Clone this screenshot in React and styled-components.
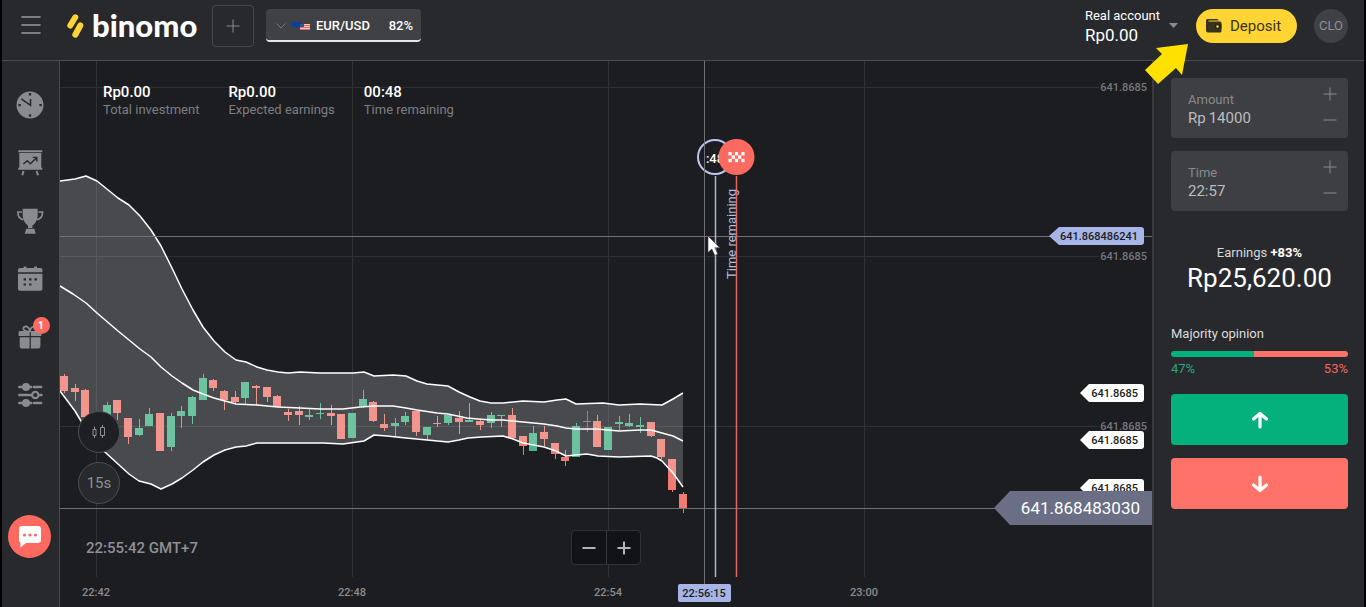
import React from "react";
import styled, { createGlobalStyle } from "styled-components";

const GlobalStyle = createGlobalStyle`
  * { box-sizing: border-box; }
  body {
    margin: 0;
    background: #000;
    color: #fff;
    font-family: Roboto, "Liberation Sans", sans-serif;
    font-size: 13px;
  }
  button, input { font: inherit; color: inherit; }
  button { border: 0; padding: 0; background: none; cursor: pointer; }
  svg { display: block; }
`;

const Page = styled.div`
  display: flex;
  flex-direction: column;
  min-height: 100vh;
  margin: 0 2px;
  background: #28292d;
`;

/* ---------- header ---------- */

const Header = styled.header`
  position: relative;
  display: flex;
  align-items: center;
  height: 61px;
  padding: 0 16px 9px 18px;
  border-bottom: 1px solid #4a4b4e;
`;

const MenuButton = styled.button`
  width: 22px;
  height: 22px;
  margin-right: 25px;
`;

const Logo = styled.a`
  display: flex;
  align-items: center;
  gap: 8px;
  width: 145px;
  color: #fff;
  text-decoration: none;
`;

const LogoText = styled.span`
  padding-bottom: 2px;
  font-family: Lato, sans-serif;
  font-weight: 900;
  font-size: 31px;
  line-height: 32px;
`;

const AddButton = styled.button`
  display: grid;
  place-items: center;
  width: 42px;
  height: 42px;
  border: 1px solid #47484c;
  border-radius: 4px;
`;

const AssetTab = styled.button`
  display: flex;
  align-items: center;
  width: 155px;
  height: 33px;
  margin-left: 12px;
  padding: 2px 8px 0 10px;
  border-bottom: 2px solid #e6e6e7;
  border-radius: 4px;
  background: #404144;
  font-weight: 500;

  svg { margin-right: 6px; }
  span:last-child { margin-left: auto; }
`;

const AccountButton = styled.button`
  display: flex;
  align-items: center;
  gap: 9px;
  margin-left: auto;
  text-align: left;
`;

const AccountName = styled.span`
  display: block;
  line-height: 18px;
`;

const AccountBalance = styled.span`
  display: block;
  font-size: 17px;
  line-height: 20px;
`;

const DepositButton = styled.button`
  display: flex;
  align-items: center;
  gap: 8px;
  width: 101px;
  height: 34px;
  margin-left: 18px;
  padding-left: 10px;
  border-radius: 17px;
  background: #ffd433;
  color: #38331f;
  font-size: 15px;
`;

const Avatar = styled.button`
  width: 34px;
  height: 34px;
  margin-left: 17px;
  border-radius: 50%;
  background: #404144;
  color: #8f9093;
`;

const Pointer = styled.svg`
  position: absolute;
  right: 176px;
  top: 44px;
  z-index: 2;
`;

/* ---------- body ---------- */

const Body = styled.div`
  display: flex;
  flex: 1;
`;

const Sidebar = styled.nav`
  display: flex;
  flex-direction: column;
  align-items: center;
  gap: 30px;
  width: 58px;
  padding: 30px 2px 49px 0;
  border-right: 1px solid #4a4b4e;
`;

const SideButton = styled.button`
  position: relative;
  width: 28px;
  height: 28px;
  color: #8a8b8f;
`;

const Badge = styled.span`
  position: absolute;
  top: -6px;
  right: -6px;
  width: 17px;
  border-radius: 50%;
  background: #ff6a60;
  color: #fff;
  font-size: 11px;
  font-weight: 700;
  line-height: 17px;
`;

const ChatButton = styled.button`
  display: grid;
  place-items: center;
  width: 43px;
  height: 43px;
  margin-top: auto;
  border-radius: 50%;
  background: #ff6a60;
`;

/* ---------- chart ---------- */

const Chart = styled.main`
  position: relative;
  flex: 1;
  min-width: 0;
  min-height: 546px;
  background: #1c1d21;
`;

const Canvas = styled.svg`
  position: absolute;
  inset: 0;
  width: 100%;
  height: 100%;
  overflow: hidden;
  font-size: 11px;
`;

const Stats = styled.dl`
  position: relative;
  display: flex;
  gap: 29px;
  margin: 0;
  padding: 22px 43px;
`;

const Stat = styled.div`
  display: flex;
  flex-direction: column-reverse;
`;

const StatLabel = styled.dt`
  color: #7d7e82;
  line-height: 18px;
`;

const StatValue = styled.dd`
  margin: 0;
  font-size: 15px;
  font-weight: 500;
  line-height: 18px;
`;

const ChartTools = styled.div`
  position: absolute;
  left: 18px;
  bottom: 103px;
  display: flex;
  flex-direction: column;
  gap: 9px;
`;

const RoundButton = styled.button`
  display: grid;
  place-items: center;
  width: 42px;
  height: 42px;
  border: 1px solid #4c4d50;
  border-radius: 50%;
  background: ${(p) => (p.$solid ? "#1f2023" : "#28292c")};
  color: #8f9093;
  font-size: 15px;
`;

const Clock = styled.time`
  position: absolute;
  left: 26px;
  bottom: 50px;
  color: #8f9093;
  font-size: 15px;
  font-weight: 500;
  line-height: 18px;
`;

const ZoomGroup = styled.div`
  position: absolute;
  left: 50%;
  bottom: 42px;
  display: flex;
  margin-left: -35px;
  border: 1px solid #303135;
  border-radius: 4px;
  background: #121317;
`;

const ZoomButton = styled.button`
  display: grid;
  place-items: center;
  width: 34px;
  height: 33px;

  & + & { border-left: 1px solid #38393c; }
`;

/* ---------- trade panel ---------- */

const Panel = styled.aside`
  display: flex;
  flex-direction: column;
  gap: 13px;
  width: 212px;
  padding: 17px 16px 0 17px;
  border-left: 2px solid #3a3b3f;
`;

const Field = styled.div`
  display: flex;
  justify-content: space-between;
  height: 60px;
  padding: 13px 11px 11px 17px;
  border-radius: 4px;
  background: #3e3f43;
`;

const FieldLabel = styled.label`
  display: block;
  color: #88898c;
  line-height: 18px;
`;

const FieldRow = styled.div`
  display: flex;
  gap: 3px;
  color: #bcbdbf;
  font-size: 15px;
  line-height: 18px;
`;

const FieldInput = styled.input`
  width: 80px;
  height: 18px;
  padding: 0;
  border: 0;
  outline: 0;
  background: none;
`;

const Stepper = styled.div`
  display: flex;
  flex-direction: column;
  justify-content: space-between;
  margin: -6px 0 -2px;
`;

const StepButton = styled.button`
  display: grid;
  place-items: center;
  width: 14px;
  height: 18px;
`;

const Earnings = styled.section`
  margin-top: 19px;
  text-align: center;
  line-height: 20px;

  span { color: #d8d8d9; }
`;

const EarningsValue = styled.div`
  font-size: 26px;
  line-height: 30px;
`;

const Opinion = styled.section`
  margin-top: 19px;
  padding-bottom: 3px;
  color: #dcdcdd;
`;

const OpinionTitle = styled.h2`
  margin: 0 0 8px;
  font-size: 13px;
  font-weight: 400;
  line-height: 18px;
`;

const OpinionBar = styled.div`
  display: flex;
  height: 6px;
  border-radius: 3px;
  overflow: hidden;
`;

const OpinionShare = styled.div`
  background: ${(p) => (p.$up ? "#04b07c" : "#ff7269")};
`;

const OpinionValues = styled.div`
  display: flex;
  justify-content: space-between;
  margin-top: 3px;
  line-height: 18px;
`;

const OpinionValue = styled.span`
  color: ${(p) => (p.$up ? "#2aa87d" : "#f1665f")};
`;

const TradeButton = styled.button`
  display: grid;
  place-items: center;
  height: 51px;
  border-radius: 4px;
  background: ${(p) => (p.$up ? "#04b07c" : "#ff7269")};
`;

/* ---------- icons ---------- */

const Plus = ({ size = 14, color = "#8a8b8f", width = 1 }) => (
  <svg width={size} height={size} viewBox="0 0 14 14" stroke={color} strokeWidth={width} fill="none">
    <path d="M7 0.5v13M0.5 7h13" />
  </svg>
);

const Minus = ({ size = 14, color = "#8a8b8f", width = 1 }) => (
  <svg width={size} height={size} viewBox="0 0 14 14" stroke={color} strokeWidth={width} fill="none">
    <path d="M0.5 7h13" />
  </svg>
);

const dark = "#28292d";

const sideItems = [
  {
    label: "History",
    icon: (
      <>
        <circle cx="14" cy="14" r="13.5" fill="currentColor" />
        <path d="M5.3 7.8 14.5 14.3V8" stroke={dark} strokeWidth="1.6" fill="none" />
        <path d="M12.9 2h2.2v2.4h-2.2zM12.9 23.3h2.2v2.4h-2.2zM2.4 13h2.4v2.2H2.4zM23.4 13h2.4v2.2h-2.4z" fill={dark} />
      </>
    ),
  },
  {
    label: "Strategies",
    icon: (
      <>
        <path d="M2.3 1.3h24v1.9h-24zM3.3 4h22v14.8h1v2h-24v-2h1z" fill="currentColor" />
        <path d="M7.6 22 6.2 26.2M20.6 22l1.4 4.2" stroke="currentColor" strokeWidth="2" />
        <path d="m7.3 15 4-3.4 3 3.1 6-5.8M16.8 8.4h4v4" stroke={dark} strokeWidth="1.4" fill="none" />
      </>
    ),
  },
  {
    label: "Tournaments",
    icon: (
      <>
        <path
          d="M6.7 1.7h15v5.8c0 5.4-2.3 9-5.3 11v2.6h-4.4v-2.6c-3-2-5.3-5.6-5.3-11zM10.3 21.8h8l1.4 4.9H8.7z"
          fill="currentColor"
        />
        <path d="M6 5H1.8c0 4.3 2 6.8 5.6 7.7M22.4 5h4.2c0 4.3-2 6.8-5.6 7.7" stroke="currentColor" strokeWidth="1.7" fill="none" />
      </>
    ),
  },
  {
    label: "Calendar",
    icon: (
      <>
        <path
          d="M4 3h3.6V1.6h2.8V3h7.8V1.6H21V3h3.4q2 0 2 2v2.3H2V5q0-2 2-2zM2 8.7h24.4v15q0 2-2 2H4q-2 0-2-2z"
          fill="currentColor"
        />
        <path d="M7.6 13.2h2.4v2.2H7.6zM13.1 13.2h2.4v2.2h-2.4zM18.5 13.2h2.4v2.2h-2.4zM7.6 18.4h2.4v2.2H7.6zM13.1 18.4h2.4v2.2h-2.4z" fill={dark} />
      </>
    ),
  },
  {
    label: "Bonuses",
    badge: "1",
    icon: (
      <>
        <path
          d="M4 8h9.6v5H2.6V9.4Q2.6 8 4 8zM14.8 8H24q1.4 0 1.4 1.4V13H14.8zM3.7 14.2h9.9v11.2H5.7q-2 0-2-2zM14.8 14.2h9.6v9.2q0 2-2 2h-7.6z"
          fill="currentColor"
        />
        <path d="M14 8.4C10 8.4 7.3 7.6 7.3 5.6S10 2.8 11.6 4C13 5 14 6.6 14 8.4zM14 8.4C14 6 15.5 3.5 18 4" stroke="currentColor" strokeWidth="1.8" fill="none" />
      </>
    ),
  },
  {
    label: "Settings",
    icon: (
      <>
        <path d="M3.3 6h12M18 6h7.2M3.3 14h11.5M24 14h1.5M3.3 22h12M18 22h7.2" stroke="currentColor" strokeWidth="2.4" strokeLinecap="round" />
        <circle cx="10" cy="6" r="4" fill="currentColor" />
        <circle cx="19.3" cy="14" r="3.2" stroke="currentColor" strokeWidth="2.2" fill="none" />
        <circle cx="10" cy="22" r="4" fill="currentColor" />
      </>
    ),
  },
];

/* ---------- chart data ---------- */

const upper =
  "0,120 15,118 26,115 37,120 58,137 69,144 80,155 91,169 101,185 112,207 122,228 133,249 143,266 154,280 165,291 176,299 186,301 197,306 207,309 218,311 228,312 240,311 260,312 293,312 304,311 314,315 333,314 346,315 357,320 367,323 388,325 399,331 410,336 420,340 431,342 443,342 463,340 484,341 497,339 506,338 516,343 543,342 559,344 580,343 602,344 613,338 623,332";
const middle =
  "0,225 13,233 26,242 37,252 58,270 80,288 91,296 101,306 112,315 122,322 133,329 143,333 154,337 165,340 176,343 197,344 218,346 240,347 260,348 283,348 300,346 314,345 333,345 346,347 357,349 377,352 388,353 407,357 418,358 432,359 443,359 463,361 484,363 497,365 506,367 516,368 537,368 559,370 580,369 591,369 602,372 613,375 623,380";
const lower =
  "0,330 15,350 21,360 37,384 46,392 58,403 69,413 79,420 91,423 101,428 112,423 122,417 133,409 143,401 154,394 165,389 176,386 186,385 197,382 218,382 240,382 263,382 283,383 304,380 314,374 327,375 346,377 367,379 388,381 399,379 408,377 422,376 443,375 453,378 463,382 484,386 496,390 506,395 516,394 527,393 538,395 559,396 591,395 597,397 602,400 613,412 623,426";
const band = upper + " " + lower.split(" ").reverse().join(" ");

/* slot, colour, body top, body bottom, wick top, wick bottom */
const candles = [
  [0, "r", 315, 330, 313, 332], [1, "r", 327, 331, 323, 340], [2, "r", 329, 356, 328, 356],
  [4, "g", 344, 357, 341, 360], [5, "r", 339, 352, 339, 359], [6, "r", 357, 376, 357, 383],
  [7, "g", 367, 374, 358, 375], [8, "g", 353, 365, 347, 365], [9, "r", 352, 390, 352, 390],
  [10, "g", 355, 386, 352, 390], [11, "g", 350, 355, 345, 367], [12, "g", 336, 355, 335, 363],
  [13, "g", 317, 339, 313, 339], [14, "r", 319, 327, 318, 330], [15, "r", 330, 339, 329, 349],
  [16, "r", 336, 341, 330, 342], [17, "g", 321, 337, 321, 344], [18, "r", 325, 327, 324, 344],
  [19, "r", 326, 336, 326, 341], [20, "r", 335, 346, 334, 346], [21, "r", 351, 354, 348, 360],
  [22, "r", 350, 354, 345, 364], [23, "g", 354, 356, 348, 359], [24, "g", 352, 353, 342, 358],
  [25, "r", 352, 355, 344, 364], [26, "r", 353, 378, 353, 378], [27, "g", 352, 377, 352, 377],
  [28, "g", 338, 345, 329, 347], [29, "r", 341, 360, 340, 361], [30, "r", 363, 367, 353, 370],
  [31, "g", 362, 365, 357, 376], [32, "g", 355, 361, 351, 364], [33, "r", 350, 371, 350, 375],
  [34, "g", 366, 374, 366, 379], [35, "r", 362, 363, 355, 366], [36, "g", 354, 362, 354, 364],
  [37, "r", 357, 361, 350, 373], [38, "g", 359, 361, 342, 361], [39, "r", 360, 364, 359, 369],
  [40, "g", 354, 362, 351, 367], [41, "g", 354, 355, 354, 366], [42, "r", 354, 377, 347, 378],
  [43, "r", 375, 385, 375, 394], [44, "g", 372, 390, 365, 390], [45, "r", 371, 378, 365, 385],
  [46, "r", 382, 393, 382, 398], [47, "r", 396, 400, 389, 405], [48, "g", 365, 396, 362, 396],
  [49, "n", 360, 361, 350, 371], [50, "r", 360, 386, 354, 386], [51, "g", 366, 389, 366, 389],
  [52, "g", 361, 363, 355, 369], [53, "g", 362, 365, 353, 366], [54, "g", 364, 366, 356, 372],
  [55, "r", 361, 375, 361, 376], [56, "r", 378, 396, 378, 398], [57, "r", 398, 429, 398, 431],
  [58, "r", 433, 447, 431, 452],
];
const candleColor = { r: "#f07b73", g: "#49b588", n: "#6c6d70" };

const times = [[36, "22:42"], [292, "22:48"], [548, "22:54"], [804, "23:00"]];
const prices = [26, 195, 365];
const whiteTags = [332, 379, 427];

const FinishFlag = () => (
  <g fill="#fff">
    {[0, 1, 2, 3, 4].map((c) =>
      [0, 1, 2].map((r) => (c + r) % 2 === 0 && (
        <rect key={`${c}-${r}`} x={668.5 + c * 3.2} y={91 + r * 3.4} width="3.2" height="3.4" />
      ))
    )}
  </g>
);

function PriceChart() {
  return (
    <Canvas role="img" aria-label="EUR/USD price chart">
      <g stroke="#303135">
        {times.map(([x]) => (
          <line key={x} x1={x + 0.5} x2={x + 0.5} y1="0" y2="516" />
        ))}
        <svg x="-53" width="100%" overflow="hidden">
          {prices.map((y) => (
            <line key={y} x1="0" x2="100%" y1={y + 0.5} y2={y + 0.5} />
          ))}
        </svg>
      </g>

      {candles.map(([i, kind, top, bottom, high, low]) => {
        const x = Math.round(4 + (i * 32) / 3);
        return (
          <g key={i} fill={candleColor[kind]}>
            <rect x={x} y={high} width="1" height={low - high} />
            <rect x={x - 4} y={top} width="8" height={bottom - top} />
          </g>
        );
      })}

      <polygon points={band} fill="#fff" fillOpacity="0.2" />
      <g fill="none" stroke="#fff" strokeWidth="1.5" strokeLinejoin="round">
        <polyline points={upper} />
        <polyline points={middle} />
        <polyline points={lower} />
      </g>

      <g stroke="#6f7073">
        <line x1="0" x2="100%" y1="175.5" y2="175.5" />
        <line x1="0" x2="100%" y1="447.5" y2="447.5" />
        <line x1="644.5" x2="644.5" y1="0" y2="524" />
      </g>

      <circle cx="655" cy="96" r="17" fill="#1c1d21" stroke="#b9c8f2" strokeWidth="2" />
      <text x="655" y="102" textAnchor="middle" fill="#fff" fontSize="13" fontWeight="500">:48</text>
      <line x1="644.5" x2="644.5" y1="78" y2="114" stroke="#6f7073" />
      <line x1="655.5" x2="655.5" y1="115" y2="516" stroke="#a9b4da" strokeWidth="1.5" />
      <text transform="translate(676 218) rotate(-90)" fill="#b4bedd" fontSize="13">Time remaining</text>
      <line x1="676.5" x2="676.5" y1="115" y2="516" stroke="#e8635b" strokeWidth="1.5" />
      <circle cx="676.5" cy="96" r="18" fill="#ff6a60" />
      <FinishFlag />

      <path d="M648 175v16.5l3.8-3.5 3 6.5 3-1.4-3-6.4h5z" fill="#fff" stroke="#3a3b3f" strokeWidth="0.6" />

      <g fill="#8b8c8f" fontWeight="500" textAnchor="middle">
        {times.map(([x, label]) => (
          <text key={x} x={x} y="535">{label}</text>
        ))}
      </g>
      <rect x="618" y="523" width="53" height="18" rx="2" fill="#a7b5e6" />
      <text x="644" y="536" textAnchor="middle" fill="#1c1d21" fontWeight="500">22:56:15</text>

      <svg x="100%" overflow="visible" fontWeight="500">
        <g fill="#77787c">
          {prices.map((y) => (
            <text key={y} x="-5" y={y + 4} textAnchor="end">641.8685</text>
          ))}
        </g>
        <path d="M-103 175l10-9h82q3 0 3 3v12q0 3-3 3h-82z" fill="#a7b5e6" />
        <text x="-14" y="179" textAnchor="end" fill="#1c1d21">641.868486241</text>
        {whiteTags.map((y) => (
          <g key={y} transform={`translate(0 ${y})`}>
            <path d="M-72 0l9-9h52q3 0 3 3v12q0 3-3 3h-52z" fill="#fff" />
            <text x="-14" y="4" textAnchor="end" fill="#1c1d21">641.8685</text>
          </g>
        ))}
        <path d="M-158 447l16-17h142v34h-142z" fill="#6b6f85" />
        <text x="-12" y="453" textAnchor="end" fill="#fff" fontSize="17" fontWeight="400">641.868483030</text>
      </svg>
    </Canvas>
  );
}

const stats = [
  ["Total investment", "Rp0.00"],
  ["Expected earnings", "Rp0.00"],
  ["Time remaining", "00:48"],
];

function NumberField({ id, label, prefix, value }) {
  return (
    <Field>
      <div>
        <FieldLabel htmlFor={id}>{label}</FieldLabel>
        <FieldRow>
          {prefix && <span>{prefix}</span>}
          <FieldInput id={id} defaultValue={value} />
        </FieldRow>
      </div>
      <Stepper>
        <StepButton aria-label={`Increase ${label}`}><Plus /></StepButton>
        <StepButton aria-label={`Decrease ${label}`}><Minus /></StepButton>
      </Stepper>
    </Field>
  );
}

const Arrow = ({ d }) => (
  <svg width="18" height="18" viewBox="0 0 18 18" fill="none" stroke="#fff" strokeWidth="3.2" strokeLinecap="round" strokeLinejoin="round">
    <path d={d} />
  </svg>
);

export default function App() {
  return (
    <>
      <GlobalStyle />
      <Page>
        <Header>
          <MenuButton aria-label="Menu">
            <svg width="22" height="20" viewBox="0 0 22 20" stroke="#9a9b9e" strokeWidth="1.6" strokeLinecap="round">
              <path d="M2 1h18M2 9h18M2 17h18" />
            </svg>
          </MenuButton>
          <Logo href="#" aria-label="binomo">
            <svg width="17" height="26" viewBox="0 0 17 26" stroke="#ffd433" strokeWidth="6" strokeLinecap="round">
              <path d="M8.3 4.3 3.3 12.5M13.3 12.5 8.3 21.7" />
            </svg>
            <LogoText>binomo</LogoText>
          </Logo>
          <AddButton aria-label="Add asset"><Plus /></AddButton>
          <AssetTab>
            <svg width="10" height="6" viewBox="0 0 10 6" fill="none" stroke="#77787c"><path d="M0.5 0.5 5 5l4.5-4.5" /></svg>
            <svg width="18" height="10" viewBox="0 0 18 10">
              <path d="M0 1h10v5H0z" fill="#0b3f9c" />
              <path d="M8 3h10v6H8z" fill="#f3c9c6" />
              <path d="M8 4h10v1H8zM8 6h10v1H8zM8 8h10v1H8z" fill="#e5675f" />
              <path d="M8 3h4v3H8z" fill="#2a56a8" />
            </svg>
            <span>EUR/USD</span>
            <span>82%</span>
          </AssetTab>
          <AccountButton>
            <span>
              <AccountName>Real account</AccountName>
              <AccountBalance>Rp0.00</AccountBalance>
            </span>
            <svg width="9" height="5" viewBox="0 0 9 5"><path d="M0 0h9L4.5 5z" fill="#8a8b8f" /></svg>
          </AccountButton>
          <DepositButton>
            <svg width="16" height="14" viewBox="0 0 16 14">
              <path d="M1.5 0H11q1.5 0 1.5 1.5H2.5v1H14q1.5 0 1.5 1.5v8q0 1.5-1.5 1.5H2Q0 13.5 0 11.5v-10Q0 0 1.5 0z" fill="#38331f" />
              <path d="M10 5.5h5.5v4H10q-1 0-1-1v-2q0-1 1-1z" fill="#2a2412" />
              <circle cx="11.5" cy="7.5" r="1.2" fill="#ffd433" />
            </svg>
            Deposit
          </DepositButton>
          <Avatar>CLO</Avatar>
          <Pointer width="43" height="40" viewBox="0 0 43 40">
            <path d="M43 0 11 4l6 6L0 26l13 14 18-16 6 7z" fill="#ffe100" />
          </Pointer>
        </Header>

        <Body>
          <Sidebar>
            {sideItems.map((item) => (
              <SideButton key={item.label} aria-label={item.label}>
                <svg width="28" height="28" viewBox="0 0 28 28">{item.icon}</svg>
                {item.badge && <Badge>{item.badge}</Badge>}
              </SideButton>
            ))}
            <ChatButton aria-label="Support chat">
              <svg width="22" height="22" viewBox="0 0 22 22">
                <path d="M3 0h16q3 0 3 3v11q0 3-3 3H7l-5.5 4.5V16.5Q0 16 0 14V3q0-3 3-3z" fill="#fff" />
                <g fill="#ff6a60">
                  <circle cx="5.5" cy="9" r="1.6" />
                  <circle cx="11" cy="9" r="1.6" />
                  <circle cx="16.5" cy="9" r="1.6" />
                </g>
              </svg>
            </ChatButton>
          </Sidebar>

          <Chart>
            <PriceChart />
            <Stats>
              {stats.map(([label, value]) => (
                <Stat key={label}>
                  <StatLabel>{label}</StatLabel>
                  <StatValue>{value}</StatValue>
                </Stat>
              ))}
            </Stats>
            <ChartTools>
              <RoundButton $solid aria-label="Chart type">
                <svg width="14" height="14" viewBox="0 0 14 14" fill="none" stroke="#8f9093">
                  <path d="M1 4.5h3v6H1zM2.5 1.5v3M2.5 10.5V13M8.500 2.500h4v8h-4zM10.500 0v2.500M10.500 10.500V13" />
                </svg>
              </RoundButton>
              <RoundButton>15s</RoundButton>
            </ChartTools>
            <Clock>22:55:42 GMT+7</Clock>
            <ZoomGroup>
              <ZoomButton aria-label="Zoom out"><Minus color="#b4b5b7" width={2} /></ZoomButton>
              <ZoomButton aria-label="Zoom in"><Plus color="#b4b5b7" width={2} /></ZoomButton>
            </ZoomGroup>
          </Chart>

          <Panel>
            <NumberField id="amount" label="Amount" prefix="Rp" value="14000" />
            <NumberField id="time" label="Time" value="22:57" />
            <Earnings>
              <span>Earnings</span> <b>+83%</b>
              <EarningsValue>Rp25,620.00</EarningsValue>
            </Earnings>
            <Opinion>
              <OpinionTitle>Majority opinion</OpinionTitle>
              <OpinionBar>
                <OpinionShare $up style={{ width: "47%" }} />
                <OpinionShare style={{ width: "53%" }} />
              </OpinionBar>
              <OpinionValues>
                <OpinionValue $up>47%</OpinionValue>
                <OpinionValue>53%</OpinionValue>
              </OpinionValues>
            </Opinion>
            <TradeButton $up aria-label="Up"><Arrow d="M9 16V2.5M2.5 8 9 2.5 15.5 8" /></TradeButton>
            <TradeButton aria-label="Down"><Arrow d="M9 2v13.5M2.5 10 9 15.5 15.5 10" /></TradeButton>
          </Panel>
        </Body>
      </Page>
    </>
  );
}
